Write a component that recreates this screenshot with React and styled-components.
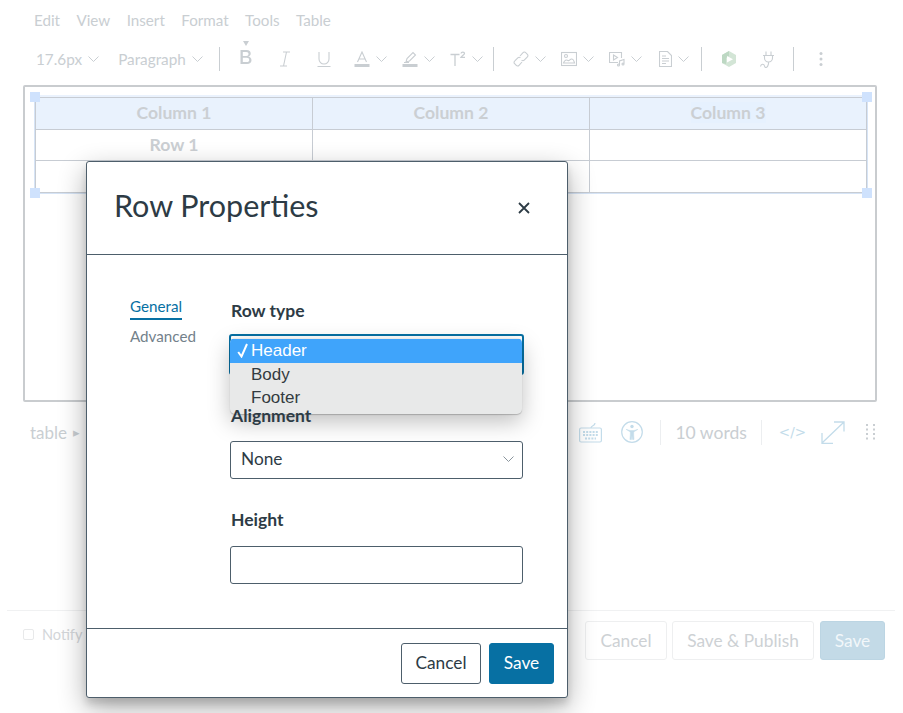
import React from 'react';
import styled, { createGlobalStyle } from 'styled-components';

const Global = createGlobalStyle`
  html, body { margin: 0; padding: 0; background: #fff; }
  body { font-family: Lato, "Open Sans", sans-serif; color: #2d3b45; }
  * { box-sizing: border-box; }
`;

const FADED = '#c9ced2';
const FADED_BLUE = '#c3dcea';

const Chevron = ({ color = FADED }) => (
  <svg width="11" height="6" viewBox="0 0 11 6" fill="none" stroke={color} strokeWidth="1">
    <path d="M.5.5l5 5 5-5" />
  </svg>
);

const stroke = { fill: 'none', stroke: FADED, strokeWidth: 1.1 };

const BoldIcon = () => (
  <svg width="16" height="30" viewBox="0 0 16 30">
    <path d="M5 0h6l-3 5z" fill={FADED} />
    <path d="M2.500 9h6.200c2.600 0 4 1.400 4 3.400 0 1.700-1 2.900-2.700 3.200 2.100.2 3.500 1.600 3.500 3.600 0 2.400-1.700 3.800-4.500 3.800H2.500z M4.800 11v3.900h3.500c1.500 0 2.200-.8 2.200-2s-.7-1.900-2.200-1.900z M4.800 16.800V21h4c1.600 0 2.400-.8 2.400-2.100s-.8-2.100-2.400-2.100z" fill={FADED} fillRule="evenodd" />
  </svg>
);
const ItalicIcon = () => (
  <svg width="16" height="16" viewBox="0 0 16 16" {...stroke}>
    <path d="M6 1h7M3 15h7M9.500 1L6.500 15" />
  </svg>
);
const UnderlineIcon = () => (
  <svg width="16" height="16" viewBox="0 0 16 16" {...stroke}>
    <path d="M3 1v7a5 5 0 0 0 10 0V1M1.500 15.500h13" />
  </svg>
);
const TextColorIcon = () => (
  <svg width="16" height="16" viewBox="0 0 16 16">
    <path d="M3.500 11L8 1l4.500 10M5 8h6" fill="none" stroke={FADED} strokeWidth="1.100" />
    <rect x="0.500" y="13" width="15" height="3" fill={FADED} />
  </svg>
);
const HighlightIcon = () => (
  <svg width="16" height="16" viewBox="0 0 16 16">
    <path d="M4 11l1-3.500L11 1.500l2.500 2.500-6 6z" fill="none" stroke={FADED} strokeWidth="1.100" />
    <path d="M2 11.500h5" stroke={FADED} strokeWidth="1" />
    <rect x="0.500" y="13" width="15" height="3" fill={FADED} />
  </svg>
);
const SuperIcon = () => (
  <svg width="16" height="16" viewBox="0 0 16 16">
    <path d="M.5 3.500h9M5 3.500V15" fill="none" stroke={FADED} strokeWidth="1.300" />
    <path d="M11 2.500c.3-1.800 3.500-1.800 3.500 0 0 1.300-2.300 2-3.500 3.900h4" fill="none" stroke={FADED} strokeWidth="1.300" />
  </svg>
);
const LinkIcon = () => (
  <svg width="16" height="16" viewBox="0 0 16 16" {...stroke}>
    <path d="M7 5l3-3.300a1.800 1.800 0 0 1 2.700-.1l1.700 1.700a1.800 1.800 0 0 1 0 2.600L11.200 9.200a1.800 1.800 0 0 1-2.600 0" />
    <path d="M9 11l-3 3.300a1.800 1.800 0 0 1-2.700.1l-1.700-1.700a1.800 1.800 0 0 1 0-2.600L4.800 6.800a1.800 1.800 0 0 1 2.600 0" />
  </svg>
);
const ImageIcon = () => (
  <svg width="16" height="16" viewBox="0 0 16 16" {...stroke}>
    <rect x="0.500" y="1.500" width="15" height="13" />
    <circle cx="5" cy="5" r="1.500" />
    <path d="M2.500 12c1-3 3-3.500 4.500-2.500s2-2 4-1.500 2 2 2.500 4z" />
  </svg>
);
const MediaIcon = () => (
  <svg width="16" height="16" viewBox="0 0 16 16" {...stroke}>
    <path d="M9 11.500H.5v-10h12V7" />
    <path d="M4.500 4l4 2.500-4 2.500z" />
    <path d="M10.500 14V10l4.500-1.500v4" />
    <circle cx="9.500" cy="14" r="1" />
    <circle cx="14" cy="13" r="1" />
  </svg>
);
const DocIcon = () => (
  <svg width="13" height="16" viewBox="0 0 13 16" {...stroke}>
    <path d="M.5.5h8l4 4v11H.5z" />
    <path d="M3 5h4M3 7.500h7M3 10h7M3 12.500h4" />
  </svg>
);
const AppIcon = () => (
  <svg width="16" height="16" viewBox="0 0 16 16">
    <path d="M8 0l7 4v8l-7 4-7-4V4z" fill="#d3e5d6" />
    <path d="M1 4l7-4v5L5 7v6l-4-1z" fill="#bdd8c3" />
    <path d="M6 5l6 3.200L6 11.500z" fill="#fff" />
  </svg>
);
const PlugIcon = () => (
  <svg width="15" height="17" viewBox="0 0 15 17" {...stroke}>
    <path d="M6 .5v4M11 .5v4M3 4.500h11M4.500 4.500v2.500a4 4 0 0 0 8 0V4.500M8.500 11v2" />
    <path d="M.5 15.500c.5-3 3.500-3 4 -.5s3 2 4-2" />
  </svg>
);
const DotsIcon = () => (
  <svg width="4" height="16" viewBox="0 0 4 16" fill={FADED}>
    <circle cx="2" cy="2.500" r="1.500" />
    <circle cx="2" cy="8" r="1.500" />
    <circle cx="2" cy="13.500" r="1.500" />
  </svg>
);

const KeyboardIcon = () => (
  <svg width="23" height="21" viewBox="0 0 23 21" fill="none" stroke={FADED_BLUE} strokeWidth="1.200">
    <rect x="0.600" y="6" width="21.800" height="14" rx="1.500" />
    <path d="M12 6c0-3 4-1.500 4-5" />
    <path d="M4 10h15M4 13h15M6 16.500h11" strokeWidth="2" strokeDasharray="2 1.200" />
  </svg>
);
const A11yIcon = () => (
  <svg width="22" height="22" viewBox="0 0 22 22" fill="none" stroke={FADED_BLUE} strokeWidth="1.200">
    <circle cx="11" cy="11" r="10.300" />
    <circle cx="11" cy="5.500" r="1.700" fill={FADED_BLUE} stroke="none" />
    <path d="M5 8.300l4 1.200h4l4-1.200-4.300 2.600v3.100l.3 4.500h-1.500l-.5-4-.5 4H8.900l.4-4.500v-3.100z" fill={FADED_BLUE} strokeWidth=".5" />
  </svg>
);
const ExpandIcon = () => (
  <svg width="24" height="23" viewBox="0 0 24 23" fill="none" stroke={FADED_BLUE} strokeWidth="1.300">
    <path d="M1.500 21.500L22.500 1.500M13 1h10v9.500M1 12v10.500h11" />
  </svg>
);
const GripIcon = () => (
  <svg width="9" height="18" viewBox="0 0 9 18" fill={FADED}>
    {[1, 5.500, 10, 14.500].flatMap((y) =>
      [0, 7].map((x) => <rect key={`${x}-${y}`} x={x} y={y} width="2" height="2" />)
    )}
  </svg>
);
const CloseIcon = () => (
  <svg width="12" height="12" viewBox="0 0 12 12" stroke="#2d3b45" strokeWidth="1.800">
    <path d="M1 1l10 10M11 1L1 11" />
  </svg>
);
const CheckIcon = () => (
  <svg width="11" height="15" viewBox="0 0 11 15" fill="none" stroke="#fff" strokeWidth="2">
    <path d="M1.200 9l3.300 4.500L10 1" />
  </svg>
);

export default function App() {
  return (
    <Page>
      <Global />

      <MenuBar>
        {['Edit', 'View', 'Insert', 'Format', 'Tools', 'Table'].map((item) => (
          <span key={item}>{item}</span>
        ))}
      </MenuBar>

      <Toolbar>
        <Group gap={19} tail={6}>
          <Tool><ToolText>17.6px</ToolText><Chevron /></Tool>
          <Tool><ToolText>Paragraph</ToolText><Chevron /></Tool>
        </Group>
        <Separator />
        <Group gap={23}>
          <BoldWrap><BoldIcon /></BoldWrap>
          <ItalicIcon />
          <UnderlineIcon />
        </Group>
        <Group gap={15} lead={22}>
          <Tool><TextColorIcon /><Chevron /></Tool>
          <Tool><HighlightIcon /><Chevron /></Tool>
          <Tool><SuperIcon /><Chevron /></Tool>
        </Group>
        <Separator />
        <Group gap={15} tail={2}>
          <Tool><LinkIcon /><Chevron /></Tool>
          <Tool><ImageIcon /><Chevron /></Tool>
          <Tool><MediaIcon /><Chevron /></Tool>
          <DocTool><DocIcon /><Chevron /></DocTool>
        </Group>
        <Separator />
        <Group gap={23} tail={8}>
          <AppIcon />
          <PlugIcon />
        </Group>
        <Separator />
        <Group gap={0} lead={6}>
          <DotsIcon />
        </Group>
      </Toolbar>

      <Editor>
        <TableFrame>
          <Handle top left />
          <Handle top />
          <Handle left />
          <Handle />
          <Grid>
            <tbody>
              <tr>
                <HeadCell>Column 1</HeadCell>
                <HeadCell>Column 2</HeadCell>
                <HeadCell><Selected>Column 3</Selected></HeadCell>
              </tr>
              <tr>
                <BodyCell>Row 1</BodyCell>
                <BodyCell />
                <BodyCell />
              </tr>
              <tr>
                <LastCell />
                <LastCell />
                <LastCell />
              </tr>
            </tbody>
          </Grid>
        </TableFrame>
      </Editor>

      <StatusBar>
        <Crumb>table<CrumbArrow>▸</CrumbArrow></Crumb>
        <StatusTools>
          <KeyboardIcon />
          <A11yIcon />
          <StatusDivider pull={2} />
          <WordCount>10 words</WordCount>
          <StatusDivider />
          <CodeToggle>&lt;/&gt;</CodeToggle>
          <ExpandIcon />
          <GripWrap><GripIcon /></GripWrap>
        </StatusTools>
      </StatusBar>

      <FormFooter>
        <Notify><NotifyBox />Notify users</Notify>
        <FormActions>
          <GhostButton width={82}>Cancel</GhostButton>
          <GhostButton width={142}>Save &amp; Publish</GhostButton>
          <FadedSave width={65}>Save</FadedSave>
        </FormActions>
      </FormFooter>

      <Modal>
        <ModalHeader>
          <ModalTitle>Row Properties</ModalTitle>
          <CloseIcon />
        </ModalHeader>
        <ModalBody>
          <Tabs>
            <Tab active>General</Tab>
            <Tab>Advanced</Tab>
          </Tabs>
          <Fields>
            <Field>
              <FieldLabel>Row type</FieldLabel>
              <FocusedSelect />
              <Dropdown>
                <Option active><CheckMark><CheckIcon /></CheckMark>Header</Option>
                <Option>Body</Option>
                <Option>Footer</Option>
              </Dropdown>
            </Field>
            <Field>
              <FieldLabel>Alignment</FieldLabel>
              <SelectBox>None<Chevron color="#8a959d" /></SelectBox>
            </Field>
            <Field>
              <FieldLabel>Height</FieldLabel>
              <TextBox />
            </Field>
          </Fields>
        </ModalBody>
        <ModalFooter>
          <CancelButton>Cancel</CancelButton>
          <SaveButton>Save</SaveButton>
        </ModalFooter>
      </Modal>
    </Page>
  );
}

const Page = styled.div`
  position: relative;
  display: flex;
  flex-direction: column;
  width: 903px;
  height: 713px;
  overflow: hidden;
  background: #fff;
`;

const MenuBar = styled.div`
  display: flex;
  align-items: center;
  gap: 16.400px;
  height: 40px;
  padding-left: 34px;
  font-size: 15.200px;
  color: ${FADED};
`;

const Toolbar = styled.div`
  display: flex;
  align-items: center;
  height: 38px;
  padding-left: 36px;
`;

const Group = styled.div`
  display: flex;
  align-items: center;
  gap: ${(p) => p.gap}px;
  margin-left: ${(p) => p.lead || 0}px;
  margin-right: ${(p) => p.tail || 0}px;
`;

const Tool = styled.div`
  display: flex;
  align-items: center;
  gap: 6px;
`;

const DocTool = styled(Tool)`
  margin-left: 2px;
`;

const ToolText = styled.span`
  font-size: 15.300px;
  color: ${FADED};
`;

const BoldWrap = styled.div`
  display: flex;
  margin: -6px 0 0 -1px;
`;

const Separator = styled.div`
  width: 1px;
  height: 24px;
  margin: 0 19px 0 10px;
  background: ${FADED};
`;

const Editor = styled.div`
  height: 317px;
  margin: 7px 26px 0 23px;
  padding: 10px 8px 10px 10px;
  border: 2px solid #c9cccf;
  border-radius: 2px;
`;

const TableFrame = styled.div`
  position: relative;
  box-shadow: 0 -2px 0 #eaf2fd, 0 0 0 1px #d6e4f6;
`;

const Handle = styled.div`
  position: absolute;
  ${(p) => (p.left ? 'left: -5px;' : 'right: -5px;')}
  ${(p) => (p.top ? 'top: -5px;' : 'bottom: -5px;')}
  width: 10px;
  height: 10px;
  background: #cfe2fd;
`;

const Grid = styled.table`
  width: 100%;
  border-collapse: collapse;
  table-layout: fixed;
`;

const HeadCell = styled.td`
  height: 32px;
  padding: 0 0 2px;
  border: 1px solid #c7ccd3;
  background: #e9f2fd;
  text-align: center;
  font-size: 17.600px;
  font-weight: 700;
  color: #cbcfd3;
`;

const BodyCell = styled(HeadCell)`
  height: 31px;
  background: #fff;
`;

const LastCell = styled(BodyCell)`
  height: 32px;
`;

const Selected = styled.span`
  background: #e6f1fe;
`;

const StatusBar = styled.div`
  display: flex;
  align-items: center;
  justify-content: space-between;
  height: 60px;
  padding: 0 28px 0 30px;
`;

const Crumb = styled.div`
  display: flex;
  align-items: center;
  gap: 6px;
  font-size: 17px;
  color: ${FADED};
`;

const CrumbArrow = styled.span`
  font-size: 13px;
`;

const StatusTools = styled.div`
  display: flex;
  align-items: center;
  gap: 19px;
`;

const StatusDivider = styled.div`
  width: 1px;
  height: 25px;
  margin-left: ${(p) => -(p.pull || 0)}px;
  background: #eceef0;
`;

const WordCount = styled.span`
  margin: 0 -5px;
  font-size: 17.500px;
  color: ${FADED};
`;

const CodeToggle = styled.span`
  margin: 0 -4px 0 -2px;
  font-family: "DejaVu Sans", sans-serif;
  font-size: 13.500px;
  color: ${FADED_BLUE};
`;

const GripWrap = styled.div`
  display: flex;
  margin-left: 2px;
`;

const FormFooter = styled.div`
  display: flex;
  align-items: flex-start;
  justify-content: space-between;
  margin: auto 8px 0 7px;
  height: 103px;
  padding: 10px 10px 0 16px;
  border-top: 1px solid #f0f1f2;
`;

const Notify = styled.label`
  display: flex;
  align-items: center;
  gap: 8px;
  margin-top: 5px;
  font-size: 14.500px;
  color: #d3d6d9;
`;

const NotifyBox = styled.span`
  width: 11px;
  height: 11px;
  border: 1px solid #e8e9ea;
  border-radius: 2px;
`;

const FormActions = styled.div`
  display: flex;
  gap: 5px;
`;

const GhostButton = styled.button`
  width: ${(p) => p.width}px;
  height: 39px;
  padding: 0;
  border: 1px solid #eeeff0;
  border-radius: 3px;
  background: #fff;
  font: 400 17.300px Lato, sans-serif;
  color: #cdd1d4;
`;

const FadedSave = styled(GhostButton)`
  margin-left: 1px;
  border-color: #bcd5e3;
  background: #c3dae7;
  color: #f2f7fa;
`;

const Modal = styled.div`
  position: absolute;
  left: 86px;
  top: 161px;
  display: flex;
  flex-direction: column;
  width: 482px;
  height: 537px;
  border: 1px solid #4d5e6b;
  border-radius: 3px;
  background: #fff;
  box-shadow: 0 6px 7px rgba(0, 0, 0, 0.12), 0 10px 28px rgba(0, 0, 0, 0.32);
`;

const ModalHeader = styled.div`
  display: flex;
  align-items: center;
  justify-content: space-between;
  flex: none;
  height: 93px;
  padding: 0 37px 0 27px;
  border-bottom: 1px solid #4d5e6b;
`;

const ModalTitle = styled.h2`
  margin: -6px 0 0;
  font-size: 30.500px;
  font-weight: 400;
  color: #2d3b45;
`;

const ModalBody = styled.div`
  display: flex;
  flex: 1;
  padding: 43px 44px 0 43px;
`;

const Tabs = styled.div`
  display: flex;
  flex-direction: column;
  align-items: flex-start;
  gap: 7px;
  width: 100px;
  margin-top: -1px;
  font-size: 15.200px;
`;

const Tab = styled.div`
  padding-bottom: 2px;
  line-height: 19px;
  border-bottom: 2px solid ${(p) => (p.active ? '#0770a3' : 'transparent')};
  color: ${(p) => (p.active ? '#0770a3' : '#73818b')};
`;

const Fields = styled.div`
  display: flex;
  flex-direction: column;
  gap: 28px;
  width: 293px;
`;

const Field = styled.div`
  position: relative;
  display: flex;
  flex-direction: column;
  gap: 12px;
`;

const FieldLabel = styled.div`
  padding-left: 1px;
  font-size: 17.500px;
  font-weight: 700;
  line-height: 26px;
  color: #2d3b45;
`;

const SelectBox = styled.div`
  display: flex;
  align-items: center;
  justify-content: space-between;
  height: 38px;
  padding: 0 8px 3px 10px;
  border: 1px solid #4d5e6b;
  border-radius: 3px;
  font-size: 17.300px;
`;

const FocusedSelect = styled(SelectBox)`
  height: 41px;
  margin: -2px -1px 0;
  border: 2px solid #0770a3;
`;

const TextBox = styled(SelectBox)`
  margin-top: 1px;
`;

const Dropdown = styled.div`
  position: absolute;
  left: 0;
  top: 40px;
  width: 292px;
  padding: 1px 0 5px;
  overflow: hidden;
  border-radius: 5px;
  background: #e8e9e9;
  box-shadow: 0 1px 1px rgba(0, 0, 0, 0.2), 0 8px 22px rgba(0, 0, 0, 0.25);
  font-family: "Liberation Sans", Arial, sans-serif;
  font-size: 17px;
  color: #333b40;
`;

const Option = styled.div`
  position: relative;
  height: ${(p) => (p.active ? 24 : 23)}px;
  padding-left: 21px;
  line-height: 24px;
  background: ${(p) => (p.active ? '#3fa4fb' : 'transparent')};
  color: ${(p) => (p.active ? '#fff' : '#333b40')};
`;

const CheckMark = styled.span`
  position: absolute;
  left: 7px;
  top: 4px;
  display: flex;
`;

const ModalFooter = styled.div`
  display: flex;
  flex: none;
  justify-content: flex-end;
  gap: 8px;
  height: 69px;
  padding: 14px 13px 0 0;
  border-top: 1px solid #4d5e6b;
`;

const CancelButton = styled.button`
  width: 80px;
  height: 41px;
  padding: 0 0 2px;
  border: 1px solid #4d5e6b;
  border-radius: 3px;
  background: #fff;
  font: 400 17.300px Lato, sans-serif;
  color: #2d3b45;
`;

const SaveButton = styled(CancelButton)`
  width: 65px;
  border-color: #0770a3;
  background: #0770a3;
  color: #fff;
`;
